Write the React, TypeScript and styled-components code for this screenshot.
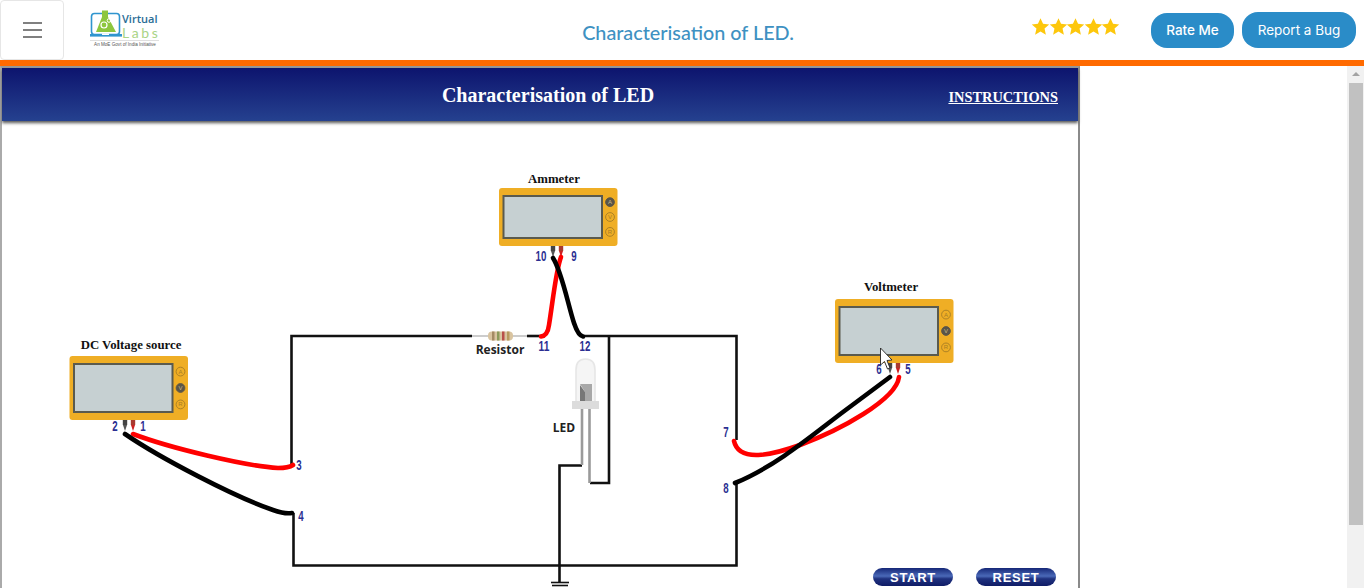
import React from 'react';
import styled, { createGlobalStyle } from 'styled-components';

const GlobalStyle = createGlobalStyle`
  html, body {
    margin: 0;
    padding: 0;
    height: 588px;
    overflow: hidden;
    background: #fff;
  }
`;

interface IMeterProps {
  x: number;
  y: number;
  h: number;
  active: number;
  label: string;
  labelX: number;
  labelY: number;
}

// the three little dial buttons sit at these offsets down the meter
const DIALS = ['A', 'V', 'R'];

const Meter: React.FC<IMeterProps> = ({ x, y, h, active, label, labelX, labelY }) => (
  <g>
    <MeterLabel x={labelX} y={labelY} textAnchor="middle">
      {label}
    </MeterLabel>
    <rect x={x} y={y} width={118.5} height={h} rx={3} fill="#efae25" />
    <rect
      x={x + 4.5}
      y={y + 8}
      width={98.5}
      height={h - 16}
      fill="#c6d0d2"
      stroke="#5a5a4e"
      strokeWidth={2}
    />
    {DIALS.map((d, i) => (
      <g key={d}>
        <circle
          cx={x + 111}
          cy={y + h / 2 + (i - 1) * (h / 3.9)}
          r={4.4}
          fill={i === active ? '#5a5548' : 'none'}
          stroke={i === active ? '#5a5548' : '#a57c25'}
          strokeWidth={0.9}
        />
        <DialText
          x={x + 111}
          y={y + h / 2 + (i - 1) * (h / 3.9) + 2}
          textAnchor="middle"
          fill={i === active ? '#cbb98a' : '#a57c25'}
        >
          {d}
        </DialText>
      </g>
    ))}
  </g>
);

const Probes: React.FC<{ x: number; y: number }> = ({ x, y }) => (
  <g>
    <rect x={x - 2.2} y={y} width={4.4} height={5} fill="#444" />
    <path d={`M${x - 2} ${y + 5} h4 l-2 6 z`} fill="#555" />
    <rect x={x + 5.8} y={y} width={4.4} height={5} fill="#a83a30" />
    <path d={`M${x + 6} ${y + 5} h4 l-2 6 z`} fill="#c22" />
  </g>
);

const NUMBERS: [string, number, number][] = [
  ['10', 541, 261],
  ['9', 574, 261],
  ['11', 544, 351],
  ['12', 585, 351],
  ['1', 143, 431],
  ['2', 115, 431],
  ['3', 299, 470],
  ['4', 301, 521],
  ['5', 908, 374],
  ['6', 879, 374],
  ['7', 726, 437],
  ['8', 726, 493],
];

const Circuit: React.FC = () => (
  <Diagram viewBox="2 121 1076 467" width={1076} height={467}>
    {/* fixed wiring */}
    <g fill="none" stroke="#111" strokeWidth={2.6}>
      <path d="M472 336 H291.5 V465" />
      <path d="M527 336 H545" />
      <path d="M582 336 H736.5 V440" />
      <path d="M293.5 513 V565.5 H736.5 V483" />
      <path d="M609 336 V483 H590" />
      <path d="M582 465.5 H559.5 V583" />
      <path d="M551 582.5 H569" strokeWidth={1.6} />
      <path d="M552 585.5 H568" strokeWidth={1.6} />
    </g>

    {/* resistor */}
    <path d="M472 336 H527" stroke="#bbb" strokeWidth={1.6} />
    <rect x={488} y={331.5} width={25} height={9} rx={4} fill="#d9c4a0" />
    <rect x={492} y={331.5} width={2.5} height={9} fill="#a58a63" />
    <rect x={497} y={331.5} width={2.5} height={9} fill="#8c9a5a" />
    <rect x={502} y={331.5} width={2.5} height={9} fill="#b9504a" />
    <rect x={507} y={331.5} width={2.5} height={9} fill="#b79a5e" />
    <PartLabel x={500} y={354} textAnchor="middle">
      Resistor
    </PartLabel>

    {/* led */}
    <path d="M582 408 V465" stroke="#9a9a9a" strokeWidth={2.6} />
    <path d="M589.5 408 V483" stroke="#9a9a9a" strokeWidth={2.6} />
    <path
      d="M576 402 V370 Q576 359 585.5 359 Q595 359 595 370 V402 Z"
      fill="#f5f5f5"
      stroke="#e6e6e6"
      strokeWidth={1.6}
    />
    <path d="M580 384 H592 V401 H585 V392 Z" fill="#a8a8a8" />
    <path d="M580 385 L585 392 V401 H580 Z" fill="#777" />
    <rect x={572} y={401} width={27} height={8} fill="#dcdcdc" />
    <PartLabel x={564} y={432} textAnchor="middle">
      LED
    </PartLabel>

    <Meter x={499} y={188} h={58} active={0} label="Ammeter" labelX={554} labelY={183} />
    <Meter x={835} y={299} h={64} active={1} label="Voltmeter" labelX={891} labelY={291} />
    <Meter x={69.5} y={356} h={64} active={1} label="DC Voltage source" labelX={131} labelY={349} />
    <Probes x={553} y={246} />
    <Probes x={890} y={363} />
    <Probes x={125} y={420} />

    {/* patch cords */}
    <g fill="none" strokeWidth={4.6} strokeLinecap="round">
      <path d="M561 257 C 556 270, 553 300, 549 325 C 548 333, 545 336, 541 336.5" stroke="#f00" />
      <path d="M553 258 C 562 272, 568 305, 574 323 C 577 332, 580 336, 583 336.5" stroke="#000" />
      <path d="M133 434 C 170 448, 245 466, 278 468 C 285 468, 290 467, 293 465" stroke="#f00" />
      <path d="M125 434 C 160 458, 235 497, 273 510 C 280 512.5, 287 514, 292 513" stroke="#000" />
      <path d="M899 377 C 896 400, 840 430, 800 445 C 772 455, 739 463, 734 441" stroke="#f00" />
      <path d="M890 377 L 843 412 C 815 433, 775 467, 735 483" stroke="#000" />
    </g>

    {NUMBERS.map(([n, x, y]) => (
      <PinNumber
        key={n}
        x={x}
        y={y}
        textAnchor="middle"
        textLength={n.length * 5.4}
        lengthAdjust="spacingAndGlyphs"
      >
        {n}
      </PinNumber>
    ))}

    {/* mouse pointer caught in the capture */}
    <path
      d="M880.5 348 V365 L884.5 361.5 L887.5 369 L890 368 L887 360.5 L892 360 Z"
      fill="#fff"
      stroke="#222"
      strokeWidth={0.9}
    />
  </Diagram>
);

const Logo: React.FC = () => (
  <LogoSvg viewBox="0 0 70 40" width={70} height={40}>
    <rect x={1.5} y={4.5} width={28} height={21} rx={3} fill="none" stroke="#2f95cf" strokeWidth={1.6} />
    <rect x={0} y={25} width={32} height={2.6} fill="#2f95cf" />
    <rect x={12} y={24.5} width={7} height={1.5} fill="#fff" />
    <path d="M12 1.5 H18 V8 L26 23 H6 L12 8 Z" fill="#8dc63f" />
    <circle cx={14} cy={16} r={3} fill="none" stroke="#fff" strokeWidth={1.2} />
    <circle cx={19} cy={11.5} r={1.8} fill="none" stroke="#fff" strokeWidth={1} />
    <LogoName x={32} y={14} fill="#2a6d95">
      Virtual
    </LogoName>
    <LogoLabs x={32} y={29}>
      Labs
    </LogoLabs>
    <path d="M0 31.5 H69" stroke="#c9c9c9" strokeWidth={0.6} />
    <LogoTag x={35} y={37} textAnchor="middle">
      An MoE Govt of India Initiative
    </LogoTag>
  </LogoSvg>
);

const App: React.FC = () => (
  <Root>
    <GlobalStyle />
    <Header>
      <MenuButton aria-label="menu">
        <MenuBar />
        <MenuBar />
        <MenuBar />
      </MenuButton>
      <Logo />
      <Title>Characterisation of LED.</Title>
      <Stars>
        {[0, 1, 2, 3, 4].map((i) => (
          <svg key={i} viewBox="0 0 24 24" width={19} height={19}>
            <path
              d="M12 1.5 15.2 8.6 23 9.4 17.1 14.6 18.8 22.3 12 18.3 5.2 22.3 6.9 14.6 1 9.4 8.8 8.6Z"
              fill="#fdc70c"
            />
          </svg>
        ))}
      </Stars>
      <PillButton>Rate Me</PillButton>
      <PillButton wide>Report a Bug</PillButton>
    </Header>
    <OrangeBar />
    <Body>
      <Panel>
        <PanelHead>
          <PanelTitle>Characterisation of LED</PanelTitle>
          <InstructionsLink href="#">INSTRUCTIONS</InstructionsLink>
        </PanelHead>
        <Canvas>
          <Circuit />
          <Controls>
            <SimButton>START</SimButton>
            <SimButton>RESET</SimButton>
          </Controls>
        </Canvas>
      </Panel>
      <Scrollbar>
        <ScrollArrow />
        <ScrollThumb />
      </Scrollbar>
    </Body>
  </Root>
);
export default App;

const Root = styled.div`
  width: 1364px;
  height: 588px;
  overflow: hidden;
  display: flex;
  flex-direction: column;
`;

const Header = styled.header`
  height: 60px;
  display: flex;
  align-items: center;
  flex: none;
  background: #fff;
`;

const MenuButton = styled.button`
  width: 64px;
  height: 60px;
  box-sizing: border-box;
  flex: none;
  padding: 0;
  background: #fff;
  border: 1px solid #e6e6e6;
  border-radius: 4px;
  display: flex;
  flex-direction: column;
  align-items: center;
  justify-content: center;
  gap: 5px;
`;

const MenuBar = styled.span`
  display: block;
  width: 19px;
  height: 2px;
  background: #808080;
`;

const LogoSvg = styled.svg`
  flex: none;
  margin: 0 0 2px 26px;
`;

const LogoName = styled.text`
  font: 600 11px 'Open Sans', sans-serif;
`;

const LogoLabs = styled.text`
  font: 400 14px Lato, sans-serif;
  letter-spacing: 2.6px;
  fill: #a9d486;
`;

const LogoTag = styled.text`
  font: 400 4.6px 'Liberation Sans', sans-serif;
  fill: #555;
`;

const Title = styled.div`
  flex: 1;
  padding: 4px 0 0 200px;
  text-align: center;
  font: 500 19.8px Lato, sans-serif;
  color: #3e91c2;
`;

const Stars = styled.div`
  flex: none;
  width: 87px;
  margin: 0 32px 8px 16px;
  display: flex;
  justify-content: space-between;
  & > svg {
    margin: 0 -1px 0 -1px;
  }
`;

const PillButton = styled.button<{ wide?: boolean }>`
  flex: none;
  width: ${({ wide }) => (wide ? '114px' : '83px')};
  height: ${({ wide }) => (wide ? '36px' : '35px')};
  margin-right: 8px;
  padding: 0;
  border: none;
  border-radius: 16px;
  background: #2a8cc8;
  color: #fff;
  font: ${({ wide }) => (wide ? 400 : 500)} 13.5px Inter, sans-serif;
`;

const OrangeBar = styled.div`
  height: 6px;
  flex: none;
  background: #ff6a00;
`;

const Body = styled.main`
  flex: 1;
  min-height: 0;
  display: flex;
  justify-content: space-between;
`;

const Panel = styled.section`
  border-left: 2px solid #aaa;
  border-right: 2px solid #8a8a8a;
  border-top: 2px solid #999;
  width: 1076px;
  display: flex;
  flex-direction: column;
`;

const PanelHead = styled.div`
  position: relative;
  height: 53px;
  flex: none;
  display: flex;
  align-items: center;
  justify-content: center;
  padding-left: 16px;
  background: linear-gradient(#0d146e, #25418f);
  box-shadow: 0 2px 3px #555;
  z-index: 1;
`;

const PanelTitle = styled.h1`
  margin: 2px 0 0;
  font: 700 20px 'Liberation Serif', serif;
  color: #fff;
`;

const InstructionsLink = styled.a`
  position: absolute;
  right: 20px;
  top: 21px;
  font: 700 14.4px 'Liberation Serif', serif;
  color: #fff;
`;

const Canvas = styled.div`
  position: relative;
  flex: 1;
  min-height: 0;
  background: #fff;
`;

const Diagram = styled.svg`
  display: block;
`;

const MeterLabel = styled.text`
  font: 700 12.8px 'Liberation Serif', serif;
  fill: #111;
`;

const DialText = styled.text`
  font: 400 6px 'Liberation Sans', sans-serif;
`;

const PartLabel = styled.text`
  font: 700 12px 'Open Sans', sans-serif;
  fill: #222;
`;

const PinNumber = styled.text`
  font: 700 14px 'Liberation Sans', sans-serif;
  fill: #2c2f92;
`;

const Controls = styled.div`
  position: absolute;
  top: 447px;
  left: 871px;
  display: flex;
  gap: 23px;
`;

const SimButton = styled.button`
  width: 80px;
  height: 18px;
  padding: 1px 0 0;
  border: none;
  border-radius: 9px;
  background: linear-gradient(#152777 0%, #4a69b8 45%, #20327f 60%, #0f1c66 100%);
  color: #fff;
  font: 700 13px 'Liberation Sans', sans-serif;
  letter-spacing: 0.7px;
`;

const Scrollbar = styled.div`
  width: 17px;
  flex: none;
  background: #f1f1f1;
  display: flex;
  flex-direction: column;
  align-items: center;
`;

const ScrollArrow = styled.div`
  margin-top: 6px;
  width: 0;
  height: 0;
  border-left: 4px solid transparent;
  border-right: 4px solid transparent;
  border-bottom: 4px solid #a3a3a3;
`;

const ScrollThumb = styled.div`
  margin-top: 7px;
  width: 14px;
  height: 442px;
  background: #c1c1c1;
`;
